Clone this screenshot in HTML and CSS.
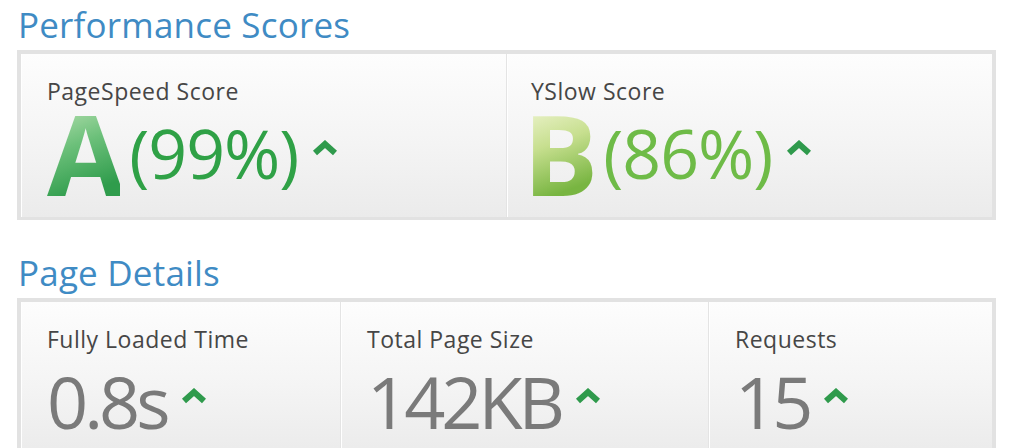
FILE: index.html
```html
<!DOCTYPE html>
<html lang="en">
<head>
  <meta charset="UTF-8" />
  <title>Performance Report</title>
  <link rel="stylesheet" href="styles.css">
</head>
<body>

  <h2 class="section-title">Performance Scores</h2>
  <div class="panel">
    <div class="cell cell-half">
      <div class="label">PageSpeed Score</div>
      <div class="value">
        <span class="grade grade-a">A</span>
        <span class="pct pct-a">(99%)</span>
        <svg class="caret" viewBox="0 0 26 16"><polyline points="3,13 13,4 23,13" /></svg>
      </div>
    </div>
    <div class="cell cell-half">
      <div class="label">YSlow Score</div>
      <div class="value">
        <span class="grade grade-b">B</span>
        <span class="pct pct-b">(86%)</span>
        <svg class="caret" viewBox="0 0 26 16"><polyline points="3,13 13,4 23,13" /></svg>
      </div>
    </div>
  </div>

  <h2 class="section-title title-details">Page Details</h2>
  <div class="panel panel-details">
    <div class="cell cell-time">
      <div class="label">Fully Loaded Time</div>
      <div class="value">
        <span class="metric">0.8s</span>
        <svg class="caret" viewBox="0 0 26 16"><polyline points="3,13 13,4 23,13" /></svg>
      </div>
    </div>
    <div class="cell cell-size">
      <div class="label">Total Page Size</div>
      <div class="value">
        <span class="metric">142KB</span>
        <svg class="caret" viewBox="0 0 26 16"><polyline points="3,13 13,4 23,13" /></svg>
      </div>
    </div>
    <div class="cell cell-req">
      <div class="label">Requests</div>
      <div class="value">
        <span class="metric">15</span>
        <svg class="caret" viewBox="0 0 26 16"><polyline points="3,13 13,4 23,13" /></svg>
      </div>
    </div>
  </div>

</body>
</html>
```

FILE: styles.css
```css
body {
  margin: 0;
  padding: 0 28px 0 17px;
  background: #ffffff;
  font-family: "Open Sans", "Liberation Sans", sans-serif;
  overflow: hidden;
}

.section-title {
  margin: 0;
  padding: 0 0 0 1px;
  height: 50px;
  font-size: 35px;
  font-weight: 400;
  line-height: 50px;
  color: #3f8bc4;
  letter-spacing: 0.2px;
}

.title-details {
  margin-top: 28px;
}

.panel {
  display: flex;
  height: 170px;
  box-sizing: border-box;
  border: 4px solid #e2e2e2;
  border-bottom-width: 3px;
  background: linear-gradient(#fdfdfd, #f4f4f4 55%, #ebebeb);
}

.panel-details {
  height: 160px;
}

.cell {
  box-sizing: border-box;
  padding: 20px 0 0 26px;
  border-left: 1px solid #e4e4e4;
  box-shadow: inset 1px 0 0 #ffffff;
}

.cell:first-child {
  border-left: none;
}

.cell-half {
  width: 485px;
}

.cell-half + .cell-half {
  flex: 1;
  padding-left: 24px;
}

.cell-time {
  width: 319px;
}

.cell-size {
  width: 368px;
}

.cell-req {
  flex: 1;
}

.label {
  font-size: 23px;
  line-height: 34px;
  color: #464646;
  letter-spacing: 0.5px;
}

.value {
  display: flex;
  align-items: center;
  height: 90px;
}

.grade {
  font-size: 112px;
  font-weight: 700;
  line-height: 90px;
  letter-spacing: -4px;
  -webkit-background-clip: text;
  background-clip: text;
  color: transparent;
}

.grade-a {
  background-image: linear-gradient(160deg, #b6e0b0 0%, #6cc07a 40%, #2f9c4c 85%);
}

.grade-b {
  margin-left: -8px;
  background-image: linear-gradient(160deg, #eef4cf 0%, #c7df8f 40%, #78b541 85%);
}

.pct {
  margin-left: 9px;
  font-size: 68px;
  line-height: 90px;
  letter-spacing: -1px;
}

.pct-a {
  color: #2fa146;
}

.pct-b {
  color: #6ebb47;
}

.metric {
  font-size: 72px;
  line-height: 90px;
  color: #7a7a7a;
  letter-spacing: -4px;
}

.caret {
  width: 26px;
  height: 16px;
  margin: 0 0 10px 14px;
}

.caret polyline {
  fill: none;
  stroke: #2f9a4c;
  stroke-width: 6;
}
```
